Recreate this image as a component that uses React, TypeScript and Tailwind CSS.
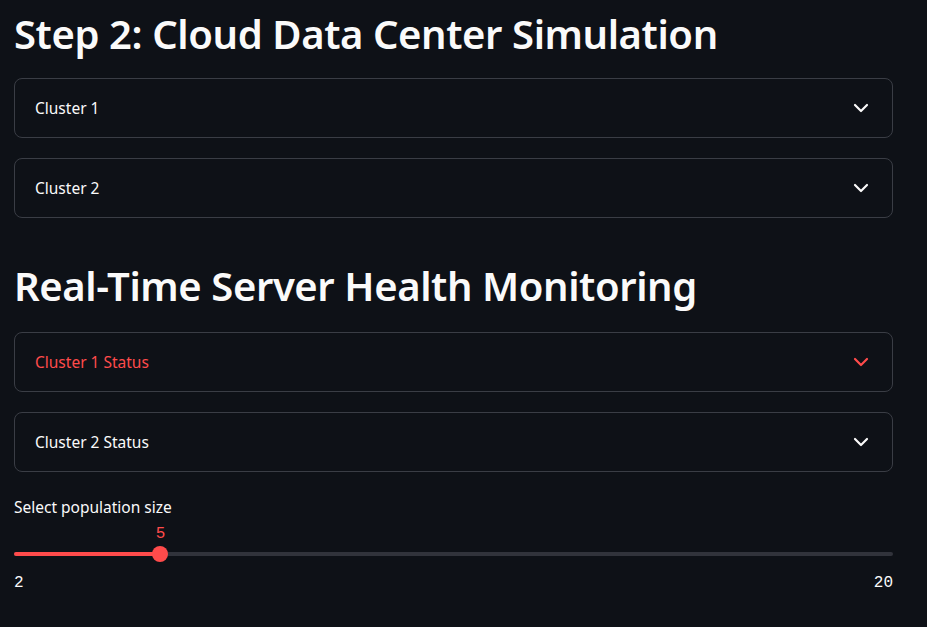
import { ChevronDown } from "lucide-react";

function Expander({ label, active = false }: { label: string; active?: boolean }) {
  return (
    <div className="flex h-[60px] items-center justify-between rounded-lg border border-[#3a3d45] pl-5 pr-[19px]">
      <span className={`pt-px text-[15.5px] ${active ? "text-[#ff4b4b]" : "text-[#fafafa]"}`}>{label}</span>
      <ChevronDown
        className={`size-[24px] ${active ? "text-[#ff4b4b]" : "text-[#fafafa]"}`}
        strokeWidth={2.2}
      />
    </div>
  );
}

function Slider({ label, min, max, value }: { label: string; min: number; max: number; value: number }) {
  const pct = ((value - min) / (max - min)) * 100;
  return (
    <div className="mt-[24px]">
      <div className="text-[15.5px] text-[#fafafa]">{label}</div>
      <div className="relative mt-[7px] h-[50px]">
        <div className="absolute left-0 right-0 top-[26px] h-[4px] rounded-full bg-[#31333b]" />
        <div
          className="absolute left-0 top-[26px] h-[4px] rounded-full bg-[#ff4b4b]"
          style={{ width: `${pct}%` }}
        />
        <div
          className="absolute top-[20px] size-[16px] -translate-x-1/2 rounded-full bg-[#ff4b4b]"
          style={{ left: `${pct}%` }}
        />
        <div
          className="absolute top-[-4px] -translate-x-1/2 font-['Liberation_Mono',monospace] text-[16px] text-[#ff4b4b]"
          style={{ left: `${pct}%` }}
        >
          {value}
        </div>
      </div>
      <div className="mt-[-5px] flex justify-between font-['Liberation_Mono',monospace] text-[16px] text-[#fafafa]">
        <span>{min}</span>
        <span>{max}</span>
      </div>
    </div>
  );
}

export default function App() {
  return (
    <div className="min-h-[627px] bg-[#0e1117] px-[14px] pr-[34px] font-['Noto_Sans',sans-serif] text-[#fafafa]">
      <h1 className="pt-[6px] text-[40px] font-semibold leading-[56px] tracking-[-0.4px]">
        Step 2: Cloud Data Center Simulation
      </h1>
      <div className="mt-[16px] flex flex-col gap-[20px]">
        <Expander label="Cluster 1" />
        <Expander label="Cluster 2" />
      </div>
      <h1 className="mt-[40px] text-[40px] font-semibold leading-[56px] tracking-[-0.4px]">
        Real-Time Server Health Monitoring
      </h1>
      <div className="mt-[18px] flex flex-col gap-[20px]">
        <Expander label="Cluster 1 Status" active />
        <Expander label="Cluster 2 Status" />
      </div>
      <Slider label="Select population size" min={2} max={20} value={5} />
    </div>
  );
}
